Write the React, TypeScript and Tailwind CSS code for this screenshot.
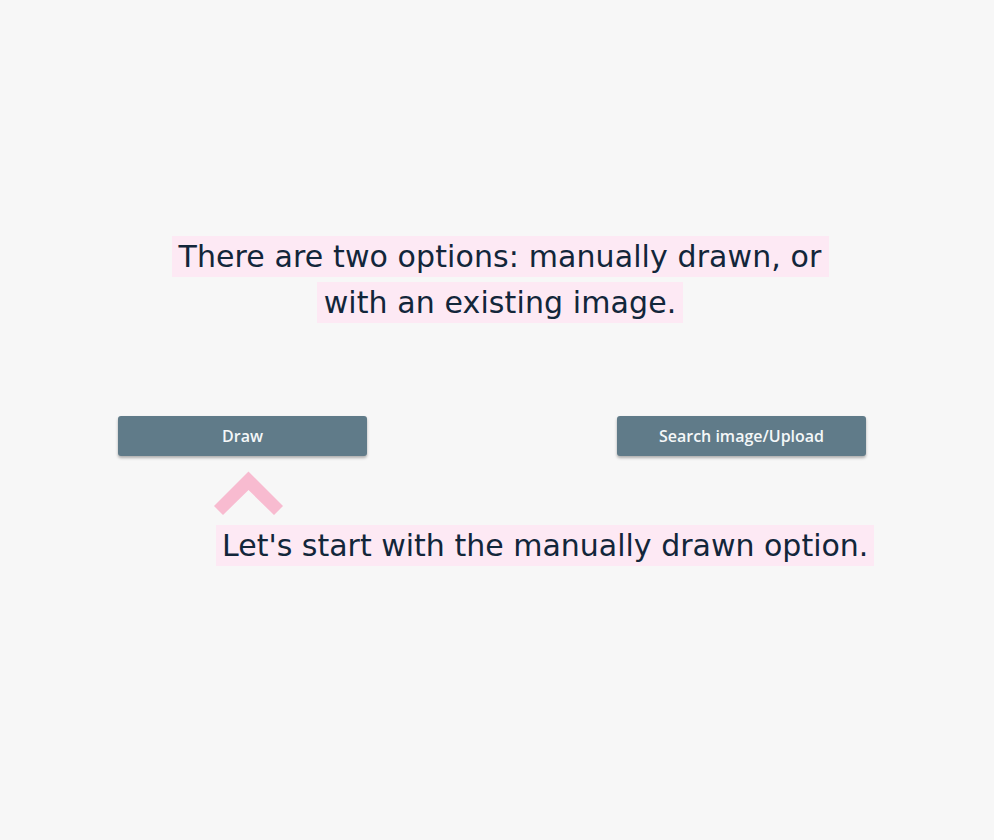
export default function App() {
  return (
    <div className="min-h-[840px] w-full bg-[#f7f7f7] font-['DejaVu_Sans',sans-serif] text-[#12263a]">
      <div className="pt-[234px] flex flex-col">
        {/* Intro */}
        <p className="text-center text-[30px] leading-[46px] tracking-[0.1px] pl-[6px]">
          <span className="bg-[#fde9f4] px-[7px] py-[3px] [box-decoration-break:clone]">
            There are two options: manually drawn, or
            <br />
            with an existing image.
          </span>
        </p>

        {/* Option buttons */}
        <div className="mt-[90px] ml-[118px] w-[748px] flex justify-between font-['Open_Sans',sans-serif]">
          <button className="w-[249px] h-[40px] rounded-[3px] bg-[#607b89] text-[#f4f7f8] text-[16px] font-semibold shadow-[0_2px_3px_rgba(0,0,0,0.3)]">
            Draw
          </button>
          <button className="w-[249px] h-[40px] rounded-[3px] bg-[#607b89] text-[#f4f7f8] text-[16px] font-semibold shadow-[0_2px_3px_rgba(0,0,0,0.3)]">
            Search image/Upload
          </button>
        </div>

        {/* Pointer */}
        <svg className="mt-[15px] ml-[213px]" width="72" height="46" viewBox="0 0 72 46">
          <polygon points="1,35 35.5,0.5 70,35 61,44 35.5,19 10,44" fill="#f8bbd0" />
        </svg>

        <p className="mt-[6px] ml-[216px] text-[30px] leading-[46px]">
          <span className="bg-[#fde9f4] px-[6px] py-[3px]">Let's start with the manually drawn option.</span>
        </p>
      </div>
    </div>
  );
}
